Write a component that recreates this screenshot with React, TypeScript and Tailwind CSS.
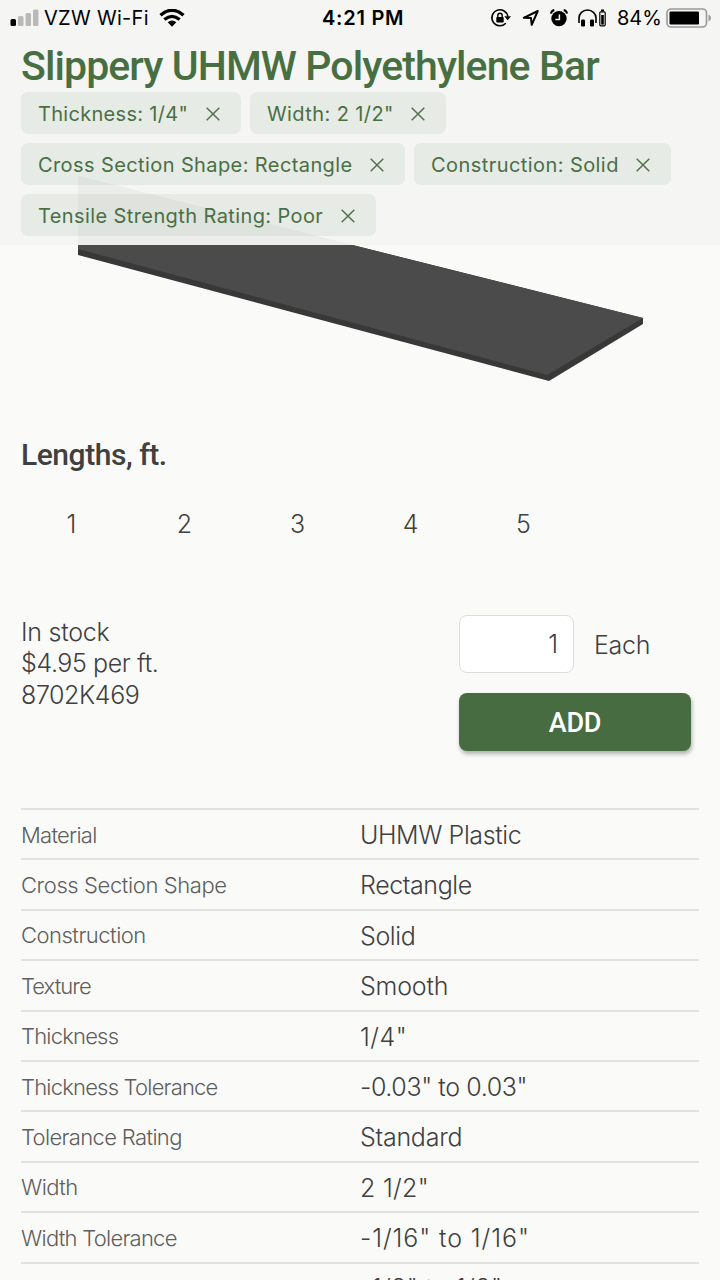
import React, { useState } from "react";

type Chip = {
  label: string;
  width: string;
  tracking: string;
};

type Spec = {
  name: string;
  value: string;
  nameTracking?: string;
  valueTracking?: string;
};

const chips: Chip[] = [
  { label: 'Thickness: 1/4"', width: "w-[220px]", tracking: "tracking-[0.3px]" },
  { label: 'Width: 2 1/2"', width: "w-[196px]", tracking: "tracking-[0.4px]" },
  { label: "Cross Section Shape: Rectangle", width: "w-[384px]", tracking: "tracking-[0.4px]" },
  { label: "Construction: Solid", width: "w-[257px]", tracking: "tracking-[0.43px]" },
  { label: "Tensile Strength Rating: Poor", width: "w-[355px]", tracking: "tracking-[0.4px]" },
];

const specs: Spec[] = [
  { name: "Material", value: "UHMW Plastic", nameTracking: "tracking-[-0.75px]" },
  { name: "Cross Section Shape", value: "Rectangle" },
  { name: "Construction", value: "Solid", nameTracking: "tracking-[-0.5px]" },
  { name: "Texture", value: "Smooth", nameTracking: "tracking-[-0.95px]", valueTracking: "tracking-[-0.2px]" },
  { name: "Thickness", value: '1/4"', nameTracking: "tracking-[-0.8px]", valueTracking: "tracking-[0.5px]" },
  { name: "Thickness Tolerance", value: '-0.03" to 0.03"', nameTracking: "tracking-[-0.8px]" },
  { name: "Tolerance Rating", value: "Standard", nameTracking: "tracking-[-0.65px]", valueTracking: "tracking-[-0.25px]" },
  { name: "Width", value: '2 1/2"', valueTracking: "tracking-[0.3px]", nameTracking: "tracking-[-0.6px]" },
  { name: "Width Tolerance", value: '-1/16" to 1/16"', nameTracking: "tracking-[-0.75px]", valueTracking: "tracking-[0.9px]" },
  { name: "", value: '-1/8" to 1/8"', valueTracking: "tracking-[0.4px]" },
];

const lengths = [1, 2, 3, 4, 5];

const StatusBar: React.FC = () => (
  <div className="flex h-9 items-center pl-[10px] pr-[8px] text-[20px] leading-none text-black">
    <div className="flex w-[312px] items-center">
      <svg width="30" height="20" viewBox="0 0 30 20">
        <rect x="0.5" y="11" width="5.5" height="7" rx="1.5" fill="#000" />
        <rect x="8" y="8" width="5.5" height="10" rx="1.5" fill="#b9b9b9" />
        <rect x="15.5" y="5" width="5.5" height="13" rx="1.5" fill="#b9b9b9" />
        <rect x="23" y="1.5" width="5.5" height="16.5" rx="1.5" fill="#b9b9b9" />
      </svg>
      <span className="ml-1 w-[106px] whitespace-nowrap tracking-[0.3px]">VZW Wi-Fi</span>
      <svg className="ml-[9px]" width="26" height="19" viewBox="0 0 26 19" fill="none" stroke="#000">
        <path d="M1.5 6.2Q13 -3.5 24.5 6.2" strokeWidth="3.4" />
        <path d="M5.4 10.5Q13 4.2 20.6 10.5" strokeWidth="3.2" />
        <path d="M8.7 13.2Q13 9.8 17.3 13.2L13 17.8Z" fill="#000" stroke="none" />
      </svg>
    </div>
    <span className="w-[168px] whitespace-nowrap font-semibold tracking-[0.75px]">4:21 PM</span>
    {/* Rotation lock */}
    <svg width="22" height="20" viewBox="0 0 22 20" fill="none" stroke="#000">
      <path d="M15.8 15.2A8 8 0 1 1 17.8 8.3" strokeWidth="1.6" />
      <path d="M14.3 8.3H21L17.7 12.2Z" fill="#000" stroke="none" />
      <rect x="6.3" y="9" width="7.4" height="5.6" rx="0.8" fill="#000" stroke="none" />
      <path d="M7.8 9.3V7.5A2.2 2.2 0 0 1 12.2 7.5V9.3" strokeWidth="1.4" />
    </svg>
    {/* Location arrow */}
    <svg className="ml-[10px]" width="18" height="18" viewBox="0 0 18 18" fill="none" stroke="#000">
      <path d="M1.8 8.8L15.8 2L9.7 15.8L9 9.1Z" strokeWidth="2" strokeLinejoin="round" />
    </svg>
    {/* Alarm */}
    <svg className="ml-[9px]" width="20" height="20" viewBox="0 0 20 20" fill="none">
      <circle cx="10" cy="10.6" r="7.7" fill="#000" />
      <path d="M2 5.7Q2.4 2.6 5.3 2M14.7 2Q17.6 2.6 18 5.7" stroke="#000" strokeWidth="2" />
      <path d="M10.4 6.4V11.5H6.3" stroke="#f4f4f3" strokeWidth="1.5" />
    </svg>
    {/* Headphones with battery level */}
    <svg className="ml-[8px]" width="30" height="20" viewBox="0 0 30 20" fill="none">
      <path d="M2 15V10A8.5 8 0 0 1 19 10V15" stroke="#000" strokeWidth="1.6" />
      <rect x="4" y="11.5" width="4" height="7" rx="1.2" fill="#000" />
      <rect x="13" y="11.5" width="4" height="7" rx="1.2" fill="#000" />
      <rect x="22.8" y="3.8" width="5.4" height="14" rx="1" stroke="#000" strokeWidth="1.2" />
      <rect x="24" y="1.5" width="3" height="2" fill="#000" />
      <rect x="24.2" y="7" width="2.6" height="9.6" fill="#000" />
    </svg>
    <span className="ml-[10px] w-[46px] whitespace-nowrap tracking-[0px]">84%</span>
    <svg className="ml-[3px] shrink-0" width="46" height="20" viewBox="0 0 46 20" fill="none">
      <rect x="1" y="1" width="39.5" height="18" rx="4" stroke="#999" strokeWidth="1.6" />
      <rect x="3.5" y="3.5" width="29.5" height="13" rx="1" fill="#000" />
      <path d="M42.5 6.5Q45 7.5 45 10T42.5 13.5Z" fill="#999" />
    </svg>
  </div>
);

const CloseIcon: React.FC = () => (
  <svg width="14" height="14" viewBox="0 0 14 14" stroke="#54704f" strokeWidth="1.5">
    <path d="M0.7 0.7L13.3 13.3M13.3 0.7L0.7 13.3" />
  </svg>
);

const App: React.FC = () => {
  const [quantity, setQuantity] = useState("1");

  return (
    <div className="relative h-[1280px] w-[720px] overflow-hidden bg-[#fafaf9] font-['Inter',sans-serif] text-[#40403f]">
      <header className="absolute inset-x-0 top-0 z-10 h-[245px] bg-[#f4f4f3]/95">
        <StatusBar />
        <h1 className="h-[56px] whitespace-nowrap pl-[21px] font-['Roboto',sans-serif] text-[41px] font-medium leading-[60px] tracking-[-0.9px] text-[#486f42]">
          Slippery UHMW Polyethylene Bar
        </h1>
        <div className="flex flex-wrap gap-[9px] pl-[21px]">
          {chips.map((chip) => (
            <button
              key={chip.label}
              className={`flex h-[42px] items-center justify-between rounded-[7px] bg-[#468246]/8 pl-[17px] pr-[21px] pt-[2px] ${chip.width}`}
            >
              <span className={`whitespace-nowrap text-[20px] leading-none text-[#4a6f45] ${chip.tracking}`}>
                {chip.label}
              </span>
              <CloseIcon />
            </button>
          ))}
        </div>
      </header>

      <main className="px-[21px] font-light">
        <svg className="-ml-[21px] block" width="720" height="400" viewBox="0 0 720 400">
          <path d="M78 176L643 318V324L549 381L78 255Z" fill="#383838" />
          <path d="M78 176L643 318L547 375L78 249Z" fill="#4b4b4b" />
        </svg>

        <h2 className="mt-[35px] font-['Roboto',sans-serif] text-[30px] font-medium leading-[40px] tracking-[-0.45px]">
          Lengths, ft.
        </h2>
        <div className="mt-[29px] -ml-[6px] flex text-[25px] leading-[40px]">
          {lengths.map((n) => (
            <button key={n} className="w-[113px] text-center">
              {n}
            </button>
          ))}
        </div>

        <section className="mt-[71px] flex justify-between pr-[8px]">
          <div className="pt-[2px] text-[25px] leading-[31.3px] tracking-[-0.4px]">
            <p className="tracking-[-0.25px]">In stock</p>
            <p>$4.95 per ft.</p>
            <p>8702K469</p>
          </div>
          <div className="w-[232px]">
            <div className="flex items-center">
              <input
                className="h-[58px] w-[115px] rounded-[8px] border border-[#dededd] bg-white pr-[15px] text-right text-[25px] outline-none"
                value={quantity}
                onChange={(e) => setQuantity(e.target.value)}
              />
              <span className="ml-[20px] pt-[3px] text-[25px] tracking-[-0.3px]">Each</span>
            </div>
            <button className="mt-[20px] h-[58px] w-full rounded-[8px] bg-[#486c41] pt-[2px] font-['Roboto',sans-serif] text-[27px] font-medium tracking-[-0.3px] text-white shadow-[1px_3px_4px_rgba(0,0,0,0.3)]">
              ADD
            </button>
          </div>
        </section>

        <dl className="mt-[57px]">
          {specs.map((spec) => (
            <div key={spec.value} className="flex h-[50.4px] items-center border-t-2 border-[#e1e1e0]">
              <dt className={`w-[339px] pt-[2px] text-[22px] text-[#5e5e5d] ${spec.nameTracking ?? "tracking-[-0.4px]"}`}>
                {spec.name}
              </dt>
              <dd className={`pt-[3px] text-[25px] ${spec.valueTracking ?? "tracking-[-0.4px]"}`}>{spec.value}</dd>
            </div>
          ))}
        </dl>
      </main>
    </div>
  );
};

export default App;
